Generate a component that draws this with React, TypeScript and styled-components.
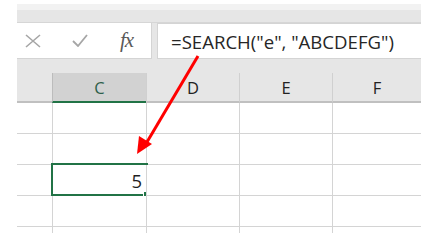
import React from "react";
import styled, { createGlobalStyle } from "styled-components";

const Global = createGlobalStyle`
  html, body { margin: 0; padding: 0; background: #ffffff; }
  body { font-family: "Open Sans", "Noto Sans", sans-serif; }
`;

const Frame = styled.div`
  position: relative;
  width: 433px;
  height: 233px;
  padding: 4px 12px 0 17px;
  box-sizing: border-box;
  overflow: hidden;
`;

const TopStrip = styled.div`
  height: 19px;
  background: linear-gradient(#f2f2f2 0 6px, #e6e6e6 6px 100%);
  border-bottom: 1px solid #d6d6d6;
  box-sizing: border-box;
`;

const FormulaRow = styled.div`
  display: flex;
  gap: 5px;
  height: 50px;
  padding-bottom: 14px;
  box-sizing: border-box;
  background: #e6e6e6;
`;

const IconBox = styled.div`
  width: 135px;
  background: #ffffff;
  border-right: 1px solid #d4d4d4;
  border-bottom: 1px solid #d4d4d4;
  display: flex;
  align-items: center;
  padding-left: 8px;
  box-sizing: border-box;
`;

const IconSlot = styled.div<{ $w: number }>`
  width: ${(p) => p.$w}px;
  display: flex;
  align-items: center;
`;

const Fx = styled.span`
  font-family: "Liberation Serif", "DejaVu Serif", serif;
  font-style: italic;
  font-size: 21px;
  color: #5a5a5a;
  letter-spacing: -1px;
  margin-left: 1px;
`;

const InputBox = styled.div`
  flex: 1;
  background: #ffffff;
  border: 1px solid #d4d4d4;
  border-right: none;
  display: flex;
  align-items: center;
  padding-left: 13px;
  font-size: 18.6px;
  color: #262626;
  white-space: nowrap;
  box-sizing: border-box;
`;

const Sheet = styled.div`
  display: grid;
  grid-template-columns: 35px 94px 93px 93px 89px;
  grid-auto-rows: 31px;
  grid-template-rows: 30px;
`;

const Corner = styled.div`
  background: #e6e6e6;
  border-bottom: 2px solid #c0c0c0;
  box-sizing: border-box;
`;

const ColHead = styled.div<{ $sel?: boolean }>`
  background: ${(p) => (p.$sel ? "#d2d2d2" : "#e6e6e6")};
  border-left: 1px solid ${(p) => (p.$sel ? "#bcbcbc" : "#d0d0d0")};
  border-bottom: 2px solid ${(p) => (p.$sel ? "#217346" : "#c0c0c0")};
  box-sizing: border-box;
  display: flex;
  align-items: center;
  justify-content: center;
  padding-top: 1px;
  font-size: 16.5px;
  color: ${(p) => (p.$sel ? "#2e5f4a" : "#222222")};
`;

const RowHead = styled.div`
  background: #ffffff;
  border-bottom: 1px solid #d4d4d4;
  box-sizing: border-box;
`;

const Cell = styled.div`
  position: relative;
  background: #ffffff;
  border-left: 1px solid #d4d4d4;
  border-bottom: 1px solid #d4d4d4;
  box-sizing: border-box;
  display: flex;
  align-items: center;
  justify-content: flex-end;
  padding-right: 4px;
  font-size: 18.5px;
  color: #1f1f1f;
`;

const Selection = styled.div`
  position: absolute;
  left: -2px;
  top: -2px;
  right: -2px;
  bottom: -1px;
  border: 2px solid #217346;
  pointer-events: none;
`;

const Handle = styled.div`
  position: absolute;
  right: -4px;
  bottom: -4px;
  width: 5px;
  height: 5px;
  background: #217346;
  border: 1px solid #ffffff;
`;

const Arrow = styled.svg`
  position: absolute;
  left: 0;
  top: 0;
  pointer-events: none;
`;

const cols = ["C", "D", "E", "F"];
const rows = [0, 1, 2, 3, 4];

export default function App() {
  return (
    <>
      <Global />
      <Frame>
        <TopStrip />
        <FormulaRow>
          <IconBox>
            <IconSlot $w={47}>
              <svg width="16" height="14" viewBox="0 0 16 14">
                <path d="M1 1 L15 13 M15 1 L1 13" stroke="#a6a6a6" strokeWidth="1.6" fill="none" />
              </svg>
            </IconSlot>
            <IconSlot $w={47}>
              <svg width="16" height="13" viewBox="0 0 16 13">
                <path d="M1 7 L6 12 L15 1" stroke="#a6a6a6" strokeWidth="1.8" fill="none" />
              </svg>
            </IconSlot>
            <IconSlot $w={30}>
              <Fx>fx</Fx>
            </IconSlot>
          </IconBox>
          <InputBox>=SEARCH("e", "ABCDEFG")</InputBox>
        </FormulaRow>
        <Sheet>
          <Corner />
          {cols.map((c) => (
            <ColHead key={c} $sel={c === "C"}>
              {c}
            </ColHead>
          ))}
          {rows.map((r) => (
            <React.Fragment key={r}>
              <RowHead />
              {cols.map((c) => (
                <Cell key={c}>
                  {r === 2 && c === "C" ? (
                    <>
                      5
                      <Selection>
                        <Handle />
                      </Selection>
                    </>
                  ) : null}
                </Cell>
              ))}
            </React.Fragment>
          ))}
        </Sheet>
        <Arrow width="433" height="242" viewBox="0 0 433 242">
          <line x1="198" y1="56" x2="147" y2="142" stroke="#ff0000" strokeWidth="3" />
          <polygon points="137,154 139,136 152,144" fill="#ff0000" />
        </Arrow>
      </Frame>
    </>
  );
}
